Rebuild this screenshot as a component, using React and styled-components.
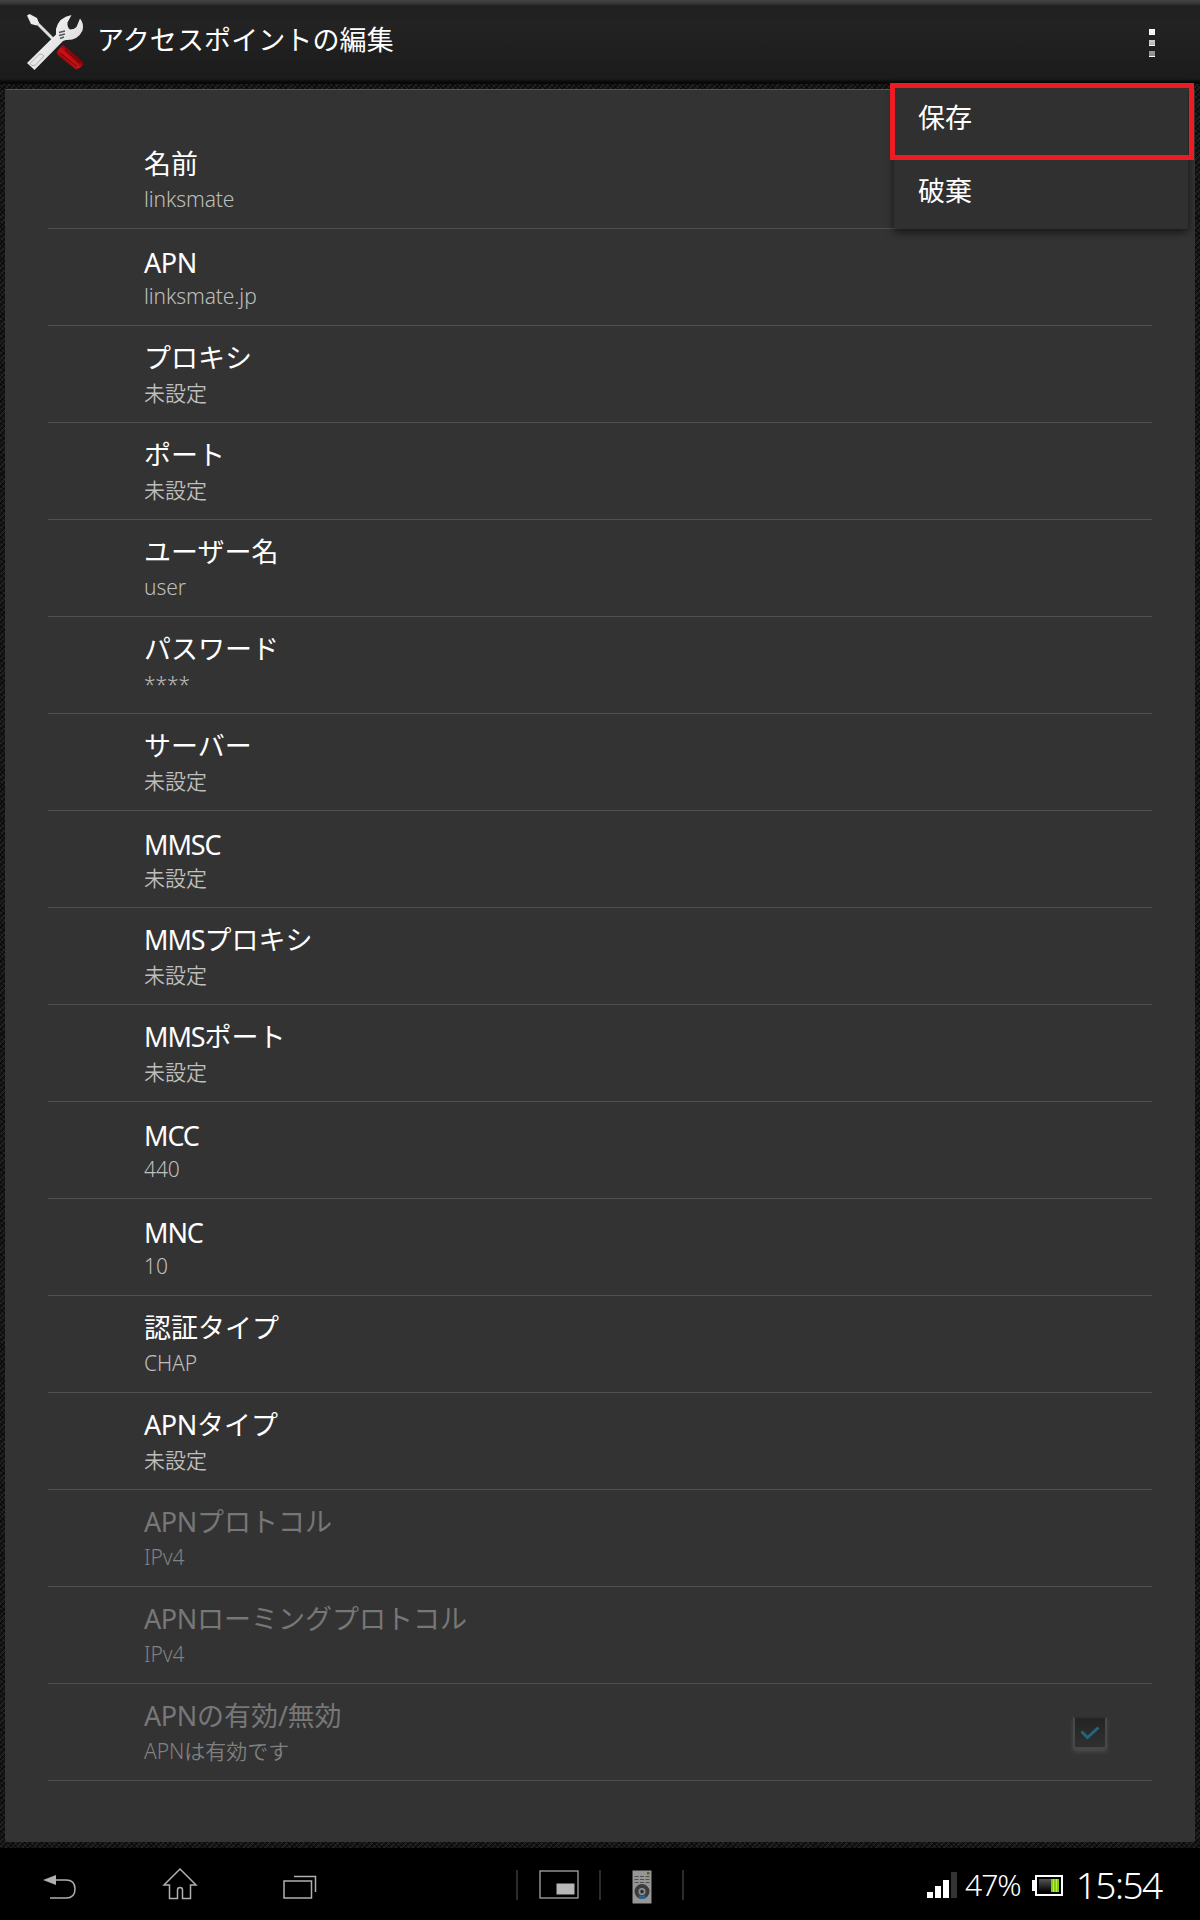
import React from 'react'
import styled, { createGlobalStyle } from 'styled-components'

const GlobalStyle = createGlobalStyle`
  * {
    box-sizing: border-box;
  }
  body {
    margin: 0;
    background: #000;
    font-family: "Noto Sans", "Noto Sans CJK JP", sans-serif;
  }
`

const settings = [
  { title: '名前', value: 'linksmate' },
  { title: 'APN', value: 'linksmate.jp' },
  { title: 'プロキシ', value: '未設定' },
  { title: 'ポート', value: '未設定' },
  { title: 'ユーザー名', value: 'user' },
  { title: 'パスワード', value: '****' },
  { title: 'サーバー', value: '未設定' },
  { title: 'MMSC', value: '未設定' },
  { title: 'MMSプロキシ', value: '未設定' },
  { title: 'MMSポート', value: '未設定' },
  { title: 'MCC', value: '440' },
  { title: 'MNC', value: '10' },
  { title: '認証タイプ', value: 'CHAP' },
  { title: 'APNタイプ', value: '未設定' },
  { title: 'APNプロトコル', value: 'IPv4', disabled: true },
  { title: 'APNローミングプロトコル', value: 'IPv4', disabled: true },
  { title: 'APNの有効/無効', value: 'APNは有効です', disabled: true, checked: true },
]

const isLatin = text => /^[\x20-\x7e]+$/.test(text)

const Runs = ({ text, spacing }) =>
  text.split(/([\x20-\x7e]+)/).filter(Boolean).map((run, key) => (
    isLatin(run) ? <Latin key={key} $spacing={spacing}>{run}</Latin> : run
  ))

const ToolsIcon = () => (
  <svg width="60" height="60" viewBox="0 0 60 60">
    <defs>
      <linearGradient id="steel" x1="0" y1="0" x2="1" y2="1">
        <stop offset="0" stopColor="#fff" />
        <stop offset="1" stopColor="#d0d0d0" />
      </linearGradient>
      <linearGradient id="handle" gradientUnits="userSpaceOnUse" x1="39" y1="50" x2="49" y2="40">
        <stop offset="0" stopColor="#8d0508" />
        <stop offset=".5" stopColor="#d01216" />
        <stop offset="1" stopColor="#6c0406" />
      </linearGradient>
    </defs>
    <path d="M12 10l17 17" stroke="#dedede" strokeWidth="3" />
    <path d="M2 2.500L4.500 1 12 5l2 5-2.500 2.500L6 11z" fill="#ececec" />
    <path d="M31.500 39l6.500-7.500L57 47.500q2.500 3 0 5.500-2.500 3-6 3.500L32.500 42z" fill="url(#handle)" />
    <path d="M36 40.500l16 13M40 37l15 13" stroke="#5c0306" strokeWidth=".9" />
    <path d="M2 50l29-28.500V16Q34 4 46.500 2L42.500 9.500q-.5 4.500 2.500 7 4 0 6.500-2.500L55 5.500q4.500 5.500 2.500 12Q53 27.500 41 27L38 28 9.500 57z" fill="url(#steel)" />
    <path d="M5 50.500l9-9q3-1.500 5 1.500l-9 9.500q-4 1-5-2z" fill="none" stroke="#a8a8a8" strokeWidth=".9" />
    <path d="M34 19.500l6-1.500M34 22.500l6-1.500M35 25.500l4-1.500" stroke="#555" strokeWidth="1.500" />
  </svg>
)

const BackIcon = () => (
  <svg width="36" height="28" viewBox="0 0 36 28" fill="none" stroke="#b0b0b0" strokeWidth="1.5">
    <path d="M1 7l13-5v10z" fill="#b0b0b0" stroke="none" />
    <path d="M13 7h11q9 0 9 9 0 9-9 9H8" />
  </svg>
)

const HomeIcon = () => (
  <svg width="36" height="34" viewBox="0 0 36 34" fill="none" stroke="#b0b0b0" strokeWidth="1.5">
    <path d="M18 2l16 16h-5.500v13.500h-8V23q0-2.500-2.500-2.500t-2.500 2.500v8.500h-8V18H2z" />
  </svg>
)

const RecentIcon = () => (
  <svg width="36" height="28" viewBox="0 0 36 28" fill="none" stroke="#b0b0b0" strokeWidth="1.5">
    <path d="M2 8h27.500v17H2zM12 3.500h21.500V19" />
  </svg>
)

const SmallAppIcon = () => (
  <svg width="40" height="29" viewBox="0 0 40 29">
    <rect x="1" y="1" width="38" height="27" fill="none" stroke="#a6a6a6" strokeWidth="1.300" />
    <rect x="17.500" y="13.500" width="18" height="11" fill="#b8b8b8" />
  </svg>
)

const RemoteIcon = () => (
  <svg width="20" height="34" viewBox="0 0 20 34">
    <rect width="19" height="33" x=".5" y=".5" fill="#969696" />
    <rect x="15" y="2" width="2.500" height="2.500" fill="#3f6d28" />
    <path d="M2.500 6.500h15M2.500 9.500h15M2.500 12.500h15" stroke="#505050" strokeDasharray="4 1.500" />
    <circle cx="10" cy="21.500" r="5.500" fill="none" stroke="#3c3c3c" strokeWidth="4" />
    <path d="M7 25.500h7l-1 3q-3 1-6 0z" fill="#2f6290" />
    <circle cx="10" cy="21.500" r="2.500" fill="#777" />
    <circle cx="10" cy="21.500" r="1.500" fill="#222" />
  </svg>
)

const SignalIcon = () => (
  <svg width="30" height="26" viewBox="0 0 30 26" fill="#fff">
    <path d="M0 20h6v6H0zM8 14h6v12H8zM16 8h6v18h-6z" />
    <path d="M24 0h6v26h-6z" fill="#333" />
  </svg>
)

const BatteryIcon = () => (
  <svg width="31" height="21" viewBox="0 0 31 21">
    <defs>
      <linearGradient id="empty" x1="0" y1="0" x2="0" y2="1">
        <stop offset="0" stopColor="#555" />
        <stop offset="1" stopColor="#000" />
      </linearGradient>
    </defs>
    <path d="M0 5h3v11H0z" fill="#fff" />
    <rect x="4" y="1" width="26" height="19" fill="#000" stroke="#fff" strokeWidth="2" />
    <rect x="7" y="4" width="12" height="13" fill="url(#empty)" />
    <rect x="19" y="4" width="8" height="13" fill="#85cb12" />
    <path d="M21.500 4v13M24.500 4v13" stroke="#b1ef49" />
  </svg>
)

const App = () => {
  return (
    <Screen>
      <GlobalStyle />
      <ActionBar>
        <ToolsIcon />
        <BarTitle>アクセスポイントの編集</BarTitle>
        <Overflow>
          <Dot $from="#fff" $to="#eee" />
          <Dot $from="#ccc" $to="#b4b4b4" />
          <Dot $from="#9a9a9a" $to="#8a8a8a" />
        </Overflow>
      </ActionBar>

      <Backdrop>
        <Panel>
          {settings.map(({ title, value, disabled, checked }) => (
            <Row key={title} $disabled={disabled}>
              <div>
                <Title $latin={isLatin(title)}>
                  <Runs text={title} spacing={title.startsWith('M') ? '-.04em' : '-.015em'} />
                </Title>
                <Value><Runs text={value} spacing="-.005em" /></Value>
              </div>
              {checked && (
                <Checkbox>
                  <svg width="20" height="14" viewBox="0 0 20 14" fill="none" stroke="#20687f" strokeWidth="2.800">
                    <path d="M1.500 5.500l6 6L18.500 1.500" />
                  </svg>
                </Checkbox>
              )}
            </Row>
          ))}
        </Panel>
      </Backdrop>

      <Menu>
        <MenuItem>保存</MenuItem>
        <MenuItem>破棄</MenuItem>
        <Highlight />
      </Menu>

      <NavBar>
        <NavButtons>
          <BackIcon />
          <HomeIcon />
          <RecentIcon />
        </NavButtons>
        <SmallApps>
          <AppSlot><SmallAppIcon /></AppSlot>
          <AppSlot><RemoteIcon /></AppSlot>
        </SmallApps>
        <Status>
          <SignalIcon />
          <Percent>47%</Percent>
          <BatteryIcon />
          <Clock>15:54</Clock>
        </Status>
      </NavBar>
    </Screen>
  )
}

const Screen = styled.div`
  position: relative;
  display: flex;
  flex-direction: column;
  width: 1200px;
  height: 1920px;
  overflow: hidden;
`

const ActionBar = styled.header`
  display: flex;
  align-items: flex-start;
  height: 84px;
  padding: 13px 45px 0 25px;
  background: linear-gradient(#444 0, #383838 3px, #202020 6px, #232323 24px, #1b1b1b 79px, #080808 82px, #080808 84px);
`

const BarTitle = styled.h1`
  margin: 0 auto 0 12px;
  color: #fff;
  font-size: 27px;
  font-weight: 400;
  line-height: 54px;
  letter-spacing: .1px;
`

const Overflow = styled.div`
  display: grid;
  gap: 5px;
  margin-top: 16px;
`

const Dot = styled.span`
  width: 6px;
  height: 6px;
  background: linear-gradient(${({ $from }) => $from}, ${({ $to }) => $to} 5px, #fff 5px);
`

const Backdrop = styled.main`
  height: 1764px;
  padding: 5px 5px 6px;
  background:
    repeating-linear-gradient(45deg, rgba(0, 0, 0, .5) 0 1px, transparent 1px 3px),
    repeating-linear-gradient(-45deg, #222 0 2px, #121212 2px 4px);
`

const Panel = styled.section`
  height: 1753px;
  padding: 42px 43px 0;
  background: #333;
  border-top: 1px solid #565656;
  border-radius: 2px;
`

const Row = styled.div`
  display: flex;
  justify-content: space-between;
  height: 97px;
  padding: 12px 45px 0 96px;
  color: ${({ $disabled }) => $disabled ? '#777' : '#fff'};
  border-bottom: 1px solid #505050;

  p:last-child {
    color: ${({ $disabled }) => $disabled ? '#808080' : '#bebebe'};
  }
`

const Latin = styled.span`
  letter-spacing: ${({ $spacing }) => $spacing};
`

const Title = styled.p`
  margin: 0;
  padding-top: ${({ $latin }) => $latin ? 2 : 0}px;
  height: 41px;
  font-size: 27px;
  line-height: 40px;
`

const Value = styled.p`
  margin: 0;
  height: 30px;
  font-size: 21px;
  font-weight: 350;
  line-height: 28px;
`

const Checkbox = styled.span`
  display: grid;
  place-items: center;
  width: 34px;
  height: 33px;
  margin-top: 20px;
  background: linear-gradient(#242424, #303030);
  border: 2px solid #484848;
  border-top-color: #303030;
  border-radius: 2px;
  box-shadow: 0 3px 4px rgba(255, 255, 255, .12);
`

const Menu = styled.div`
  position: absolute;
  top: 84px;
  left: 894px;
  width: 294px;
  height: 145px;
  background: #303030;
  border-radius: 0 0 2px 2px;
  box-shadow: 0 3px 8px rgba(0, 0, 0, .6);
`

const MenuItem = styled.div`
  height: 73px;
  padding-left: 24px;
  color: #fff;
  font-size: 27px;
  line-height: 68px;
`

const Highlight = styled.div`
  position: absolute;
  top: -1px;
  left: -4px;
  width: 304px;
  height: 77px;
  border: 5px solid #ed1c24;
`

const NavBar = styled.footer`
  display: grid;
  grid-template-columns: 516px 168px 516px;
  align-items: center;
  height: 72px;
  background: #000;
`

const NavButtons = styled.div`
  display: flex;
  gap: 84px;
  align-items: flex-end;
  padding-left: 42px;
`

const SmallApps = styled.div`
  display: grid;
  grid-template-columns: 85px 83px;
  padding-top: 1px;
`

const AppSlot = styled.div`
  display: grid;
  place-items: center;
  height: 30px;
  border-right: 2px solid #2b2b2b;

  &:first-child {
    border-left: 2px solid #2b2b2b;
  }
`

const Status = styled.div`
  display: flex;
  align-items: center;
  padding: 2px 0 0 243px;
  color: #fff;
  white-space: nowrap;
`

const Percent = styled.span`
  margin: 0 11px 0 8px;
  font-size: 30px;
  font-weight: 300;
  line-height: 36px;
  letter-spacing: -1px;
`

const Clock = styled.span`
  margin-left: 13px;
  font-size: 37px;
  font-weight: 350;
  line-height: 46px;
  letter-spacing: -1.500px;
`

export default App
